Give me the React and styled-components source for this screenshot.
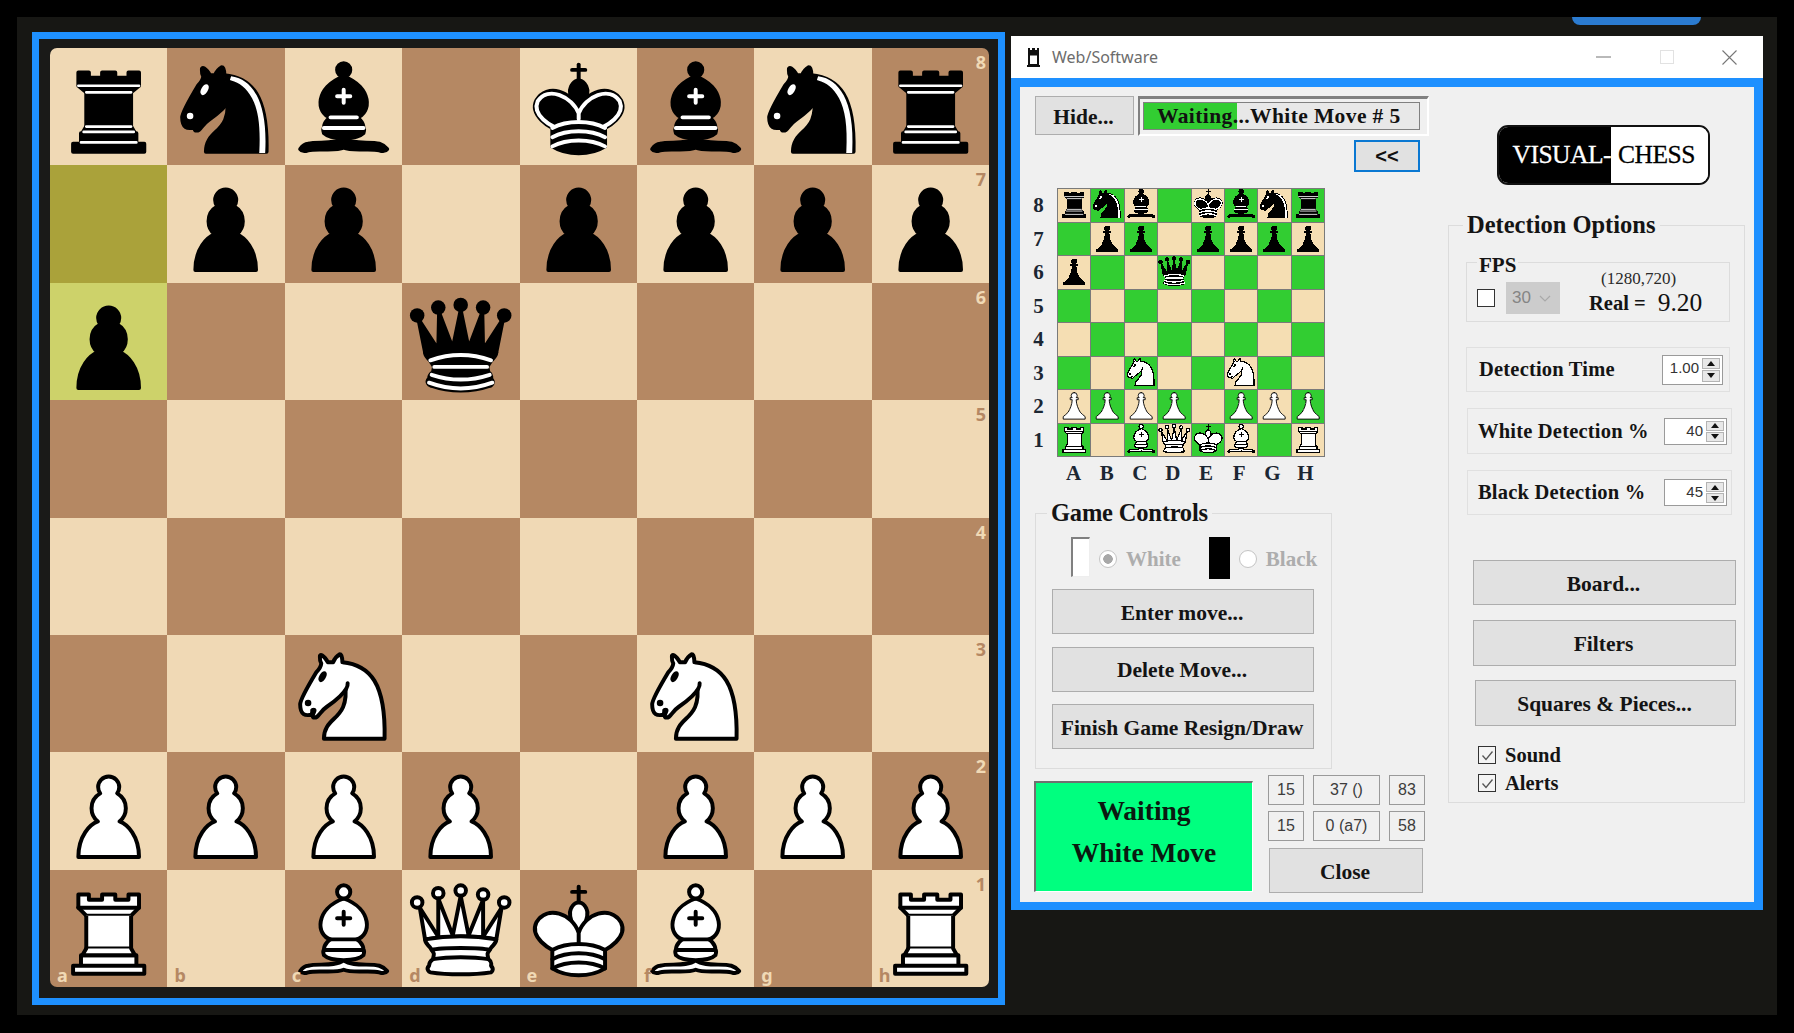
import React from 'react';
import styled, { createGlobalStyle } from 'styled-components';

const GlobalStyle = createGlobalStyle`
  html, body { margin: 0; padding: 0; background: #000; width: 1794px; height: 1033px; overflow: hidden; }
  * { box-sizing: border-box; }
  body { font-family: "Liberation Serif", "Times New Roman", serif; color: #111; }
`;

const BLUE = '#1e90ff';
const SERIF = '"Liberation Serif", "Times New Roman", serif';
const SANS = '"Liberation Sans", Arial, sans-serif';

/* ---------- chess piece drawings ---------- */
const stroke = { fillRule: 'evenodd', stroke: '#000', strokeLinecap: 'round', strokeLinejoin: 'round', strokeWidth: 1.5 };
const PAWN = 'M22.5 9c-2.21 0-4 1.79-4 4 0 .89.29 1.71.78 2.38C17.33 16.5 16 18.59 16 21c0 2.03.94 3.84 2.41 5.03-3 1.06-7.41 5.55-7.41 13.47h23c0-7.92-4.41-12.41-7.41-13.47 1.47-1.19 2.41-3 2.41-5.03 0-2.41-1.33-4.5-3.28-5.62.49-.67.78-1.49.78-2.38 0-2.21-1.79-4-4-4z';
const MINI_PAWN = 'M22.5 8a3.6 3.6 0 0 1 3.6 3.6c0 1.2-.6 2-1.2 2.6h2.4v2.4h-2.4c.2 6 2.4 10.8 4.8 15 1.8 1.8 4.2 4.2 6 5.4v3H9.3v-3c1.8-1.2 4.2-3.6 6-5.4 2.4-4.2 4.6-9 4.8-15h-2.4v-2.4h2.4c-.6-.6-1.2-1.4-1.2-2.6A3.6 3.6 0 0 1 22.5 8z';
const KING_BODY = 'M12.5 37c5.5 3.5 14.5 3.5 20 0v-7s9-4.5 6-10.5c-4-6.5-13.5-3.5-16 4V27v-3.5c-2.5-7.5-12-10.5-16-4-3 6 6 10.5 6 10.5v7';
const KING_HEAD = 'M22.5 25s4.5-7.5 3-10.5c0 0-1-2.5-3-2.5s-3 2.5-3 2.5c-1.5 3 3 10.5 3 10.5';
const KING_BANDS = 'M12.5 30c5.5-3 14.5-3 20 0m-20 3.5c5.5-3 14.5-3 20 0m-20 3.5c5.5-3 14.5-3 20 0';
const QUEEN_BASE = 'M9 26c0 2 1.5 2 2.5 4 1 1.5 1 1 .5 3.5-1.5 1-1.5 2.5-1.5 2.5-1.5 1.5.5 2.5.5 2.5 6.5 1 16.5 1 23 0 0 0 1.5-1 0-2.5 0 0 .5-1.5-1-2.5-.5-2.5-.5-2 .5-3.5 1-2 2.5-2 2.5-4-8.5-1.5-18.5-1.5-27 0z';
const BISHOP_FOOT = 'M9 36c3.39-.97 10.11.43 13.5-2 3.39 2.43 10.11 1.03 13.5 2 0 0 1.65.54 3 2-.68.97-1.65.99-3 .5-3.39-.97-10.11.46-13.5-1-3.39 1.46-10.11.03-13.5 1-1.354.49-2.323.47-3-.5 1.354-1.94 3-2 3-2z';
const BISHOP_BODY = 'M15 32c2.5 2.5 12.5 2.5 15 0 .5-1.5 0-2 0-2 0-2.5-2.5-4-2.5-4 5.5-1.5 6-11.5-5-15.5-11 4-10.5 14-5 15.5 0 0-2.5 1.5-2.5 4 0 0-.5.5 0 2z';
const BISHOP_TOP = 'M25 8a2.5 2.5 0 1 1-5 0 2.5 2.5 0 1 1 5 0z';
const BISHOP_MARK = 'M17.5 26h10M15 30h15m-7.5-14.5v5M20 18h5';
const KNIGHT_BACK = 'M22 10c10.5 1 16.5 8 16 29H15c0-9 10-6.5 8-21';
const KNIGHT_HEAD = 'M24 18c.38 2.91-5.55 7.37-8 9-3 2-2.82 4.34-5 4-1.042-.94 1.41-3.04 0-3-1 0 .19 1.23-1 2-1 0-4.003 1-4-4 0-2 6-12 6-12s1.89-1.9 2-3.5c-.73-.994-.5-2-.5-3 1-1 3 2.5 3 2.5h2s.78-1.992 2.5-3c1 0 1 3 1 3';
const KNIGHT_EYES = 'M9.5 25.5a.5.5 0 1 1-1 0 .5.5 0 1 1 1 0zm5.433-9.75a.5 1.5 30 1 1-.866-.5.5 1.5 30 1 1 .866.5z';

const PIECES = {
  P: <path {...stroke} fill="#fff" d={PAWN} />,
  p: <path {...stroke} fill="#000" d={PAWN} />,
  R: (
    <g {...stroke} fill="#fff">
      <path strokeLinecap="butt" d="M9 39h27v-3H9zm3-3v-4h21v4zm-1-22V9h4v2h5V9h5v2h5V9h4v5" />
      <path d="m34 14-3 3H14l-3-3" />
      <path strokeLinecap="butt" strokeLinejoin="miter" d="M31 17v12.5H14V17" />
      <path d="m31 29.5 1.5 2.5h-20l1.5-2.5" />
      <path fill="none" strokeLinejoin="miter" d="M11 14h23" />
    </g>
  ),
  r: (
    <g {...stroke} fill="#000">
      <path strokeLinecap="butt" d="M9 39h27v-3H9zm3.5-7 1.5-2.5h17l1.5 2.5zm-.5 4v-4h21v4z" />
      <path strokeLinecap="butt" strokeLinejoin="miter" d="M14 29.5v-13h17v13z" />
      <path strokeLinecap="butt" d="M14 16.5 11 14h23l-3 2.5zM11 14V9h4v2h5V9h5v2h5V9h4v5z" />
      <path fill="none" stroke="#fff" strokeLinejoin="miter" strokeWidth="1" d="M12 35.5h21m-20-4h19m-18-2h17m-17-13h17M11 14h23" />
    </g>
  ),
  N: (
    <g {...stroke} fill="none">
      <path fill="#fff" d={KNIGHT_BACK} />
      <path fill="#fff" d={KNIGHT_HEAD} />
      <path fill="#000" d={KNIGHT_EYES} />
    </g>
  ),
  n: (
    <g {...stroke} fill="none">
      <path fill="#000" d={KNIGHT_BACK} />
      <path fill="#000" d={KNIGHT_HEAD} />
      <path fill="#fff" stroke="#fff" d={KNIGHT_EYES} />
      <path fill="#fff" stroke="none" d="m24.55 10.4-.45 1.45.5.15c3.15 1 5.65 2.49 7.9 6.75S35.75 29.06 35.25 39l-.05.5h2.25l.05-.5c.5-10.06-.88-16.85-3.25-21.34s-5.79-6.64-9.19-7.16z" />
    </g>
  ),
  B: (
    <g {...stroke} fill="none">
      <g fill="#fff" strokeLinecap="butt">
        <path d={BISHOP_FOOT} /><path d={BISHOP_BODY} /><path d={BISHOP_TOP} />
      </g>
      <path strokeLinejoin="miter" d={BISHOP_MARK} />
    </g>
  ),
  b: (
    <g {...stroke} fill="none">
      <g fill="#000" strokeLinecap="butt">
        <path d={BISHOP_FOOT} /><path d={BISHOP_BODY} /><path d={BISHOP_TOP} />
      </g>
      <path stroke="#fff" strokeLinejoin="miter" d={BISHOP_MARK} />
    </g>
  ),
  Q: (
    <g {...stroke} fill="#fff">
      <path d="M8 12a2 2 0 1 1-4 0 2 2 0 1 1 4 0m16.5-4.5a2 2 0 1 1-4 0 2 2 0 1 1 4 0M41 12a2 2 0 1 1-4 0 2 2 0 1 1 4 0M16 8.5a2 2 0 1 1-4 0 2 2 0 1 1 4 0M33 9a2 2 0 1 1-4 0 2 2 0 1 1 4 0" />
      <path strokeLinecap="butt" d="M9 26c8.5-1.5 21-1.5 27 0l2-12-7 11V11l-5.5 13.5-3-15-3 15-5.5-14V25L7 14z" />
      <path strokeLinecap="butt" d={QUEEN_BASE} />
      <path fill="none" d="M11.5 30c3.5-1 18.5-1 22 0M12 33.5c6-1 15-1 21 0" />
    </g>
  ),
  q: (
    <g {...stroke} fill="#000">
      <g stroke="none">
        <circle cx="6" cy="12" r="2.75" /><circle cx="14" cy="9" r="2.75" /><circle cx="22.5" cy="8" r="2.75" />
        <circle cx="31" cy="9" r="2.75" /><circle cx="39" cy="12" r="2.75" />
      </g>
      <path strokeLinecap="butt" d="M9 26c8.5-1.5 21-1.5 27 0l2.5-12.5L31 25l-.3-14.1-5.2 13.6-3-14.5-3 14.5-5.2-13.6L14 25 6.5 13.5z" />
      <path strokeLinecap="butt" d={QUEEN_BASE} />
      <path fill="none" strokeLinecap="butt" d="M11 38.5a35 35 1 0 0 23 0" />
      <path fill="none" stroke="#fff" d="M11 29a35 35 1 0 1 23 0m-21.5 2.5h20m-21 3a35 35 1 0 0 22 0m-23 3a35 35 1 0 0 24 0" />
    </g>
  ),
  K: (
    <g {...stroke} fill="none">
      <path strokeLinejoin="miter" d="M22.5 11.63V6M20 8h5" />
      <path fill="#fff" strokeLinecap="butt" strokeLinejoin="miter" d={KING_HEAD} />
      <path fill="#fff" d={KING_BODY} />
      <path d={KING_BANDS} />
    </g>
  ),
  k: (
    <g {...stroke} fill="none">
      <path strokeLinejoin="miter" d="M22.5 11.63V6" />
      <path fill="#000" strokeLinecap="butt" strokeLinejoin="miter" d={KING_HEAD} />
      <path fill="#000" d={KING_BODY} />
      <path strokeLinejoin="miter" d="M20 8h5" />
      <path stroke="#fff" d="M32 29.5s8.5-4 6.03-9.65C34.15 14 25 18 22.5 24.5v2.1-2.1C20 18 10.85 14 6.97 19.85 4.5 25.5 13 29.5 13 29.5" />
      <path stroke="#fff" d={KING_BANDS} />
    </g>
  ),
};

const MINI_PIECES = {
  ...PIECES,
  P: <path {...stroke} strokeWidth="1.1" fill="#fff" d={MINI_PAWN} />,
  p: <path {...stroke} strokeWidth="0" fill="#000" d={MINI_PAWN} />,
};

const POSITION = [
  'rnb.kbnr',
  '.pp.pppp',
  'p..q....',
  '........',
  '........',
  '..N..N..',
  'PPPP.PPP',
  'R.BQKB.R',
];

const Piece = ({ code }) => (
  <PieceSvg viewBox="0.25 -0.3 44.5 44.5">{PIECES[code]}</PieceSvg>
);

const MiniPiece = ({ code }) => (
  <PieceSvg viewBox="3 5 39 39" shapeRendering="crispEdges">{MINI_PIECES[code]}</PieceSvg>
);

/* ---------- page frame ---------- */
const Page = styled.div`
  width: 1794px;
  height: 1033px;
  padding: 17px 0 0 17px;
  background: #000;
`;

const Stage = styled.div`
  position: relative;
  width: 1760px;
  height: 998px;
  padding: 15px 0 0 15px;
  background: #171714;
  display: flex;
  align-items: flex-start;
  gap: 6px;
`;

const TopTab = styled.div`
  position: absolute;
  top: 0;
  left: 1555px;
  width: 129px;
  height: 8px;
  background: #2b7bd0;
  border-radius: 0 0 9px 9px;
`;

const BoardFrame = styled.div`
  width: 973px;
  height: 973px;
  flex: none;
  padding: 9px 8px 10px 11px;
  border: 7.5px solid ${BLUE};
  background: #1a1a18;
`;

const PieceSvg = styled.svg`
  display: block;
  width: 100%;
  height: 100%;
`;

/* ---------- big board ---------- */
const Board = styled.div`
  width: 939px;
  height: 939px;
  display: grid;
  grid-template-columns: repeat(8, 1fr);
  grid-template-rows: repeat(8, 1fr);
  border-radius: 7px;
  overflow: hidden;
`;

const Square = styled.div`
  position: relative;
  background: ${(p) => p.$bg};
`;

const Coord = styled.span`
  position: absolute;
  font-family: "Noto Sans", sans-serif;
  font-weight: 700;
  font-size: 18px;
  line-height: 1;
  color: ${(p) => p.$color};
  ${(p) => (p.$rank ? 'top: 5px; right: 3px;' : 'bottom: 3px; left: 7px;')}
`;

/* ---------- window ---------- */
const Window = styled.div`
  width: 752px;
  height: 874px;
  margin-top: 4px;
  flex: none;
  display: flex;
  flex-direction: column;
`;

const TitleBar = styled.div`
  height: 42px;
  flex: none;
  background: #fff;
  display: flex;
  align-items: center;
  padding: 0 2px 0 16px;
`;

const TitleText = styled.span`
  margin-left: 12px;
  font-family: "Noto Sans", sans-serif;
  font-size: 16px;
  color: #6c6c6c;
`;

const WindowControls = styled.div`
  margin-left: auto;
  display: flex;
`;

const WindowControl = styled.div`
  width: 63px;
  height: 42px;
  display: flex;
  align-items: center;
  justify-content: center;
`;

const WindowBody = styled.div`
  flex: 1;
  min-height: 0;
  border: 9px solid ${BLUE};
  border-bottom-width: 8px;
  background: #f0f0f0;
  display: flex;
`;

const LeftColumn = styled.div`
  width: 420px;
  flex: none;
`;

const RightColumn = styled.div`
  flex: 1;
`;

/* ---------- controls ---------- */
const Button = styled.div`
  width: ${(p) => p.$w || 262}px;
  height: ${(p) => p.$h || 45}px;
  flex: none;
  padding: 3px 2px 0 0;
  display: flex;
  align-items: center;
  justify-content: center;
  background: #e1e1e1;
  border: 1.5px solid #adadad;
  font-family: ${SERIF};
  font-weight: 700;
  font-size: 21.5px;
  color: #141414;
  white-space: nowrap;
`;

const TopRow = styled.div`
  display: flex;
  gap: 4px;
  padding: 9px 0 0 15px;
`;

const StatusWell = styled.div`
  width: 291px;
  height: 40px;
  padding: 3px 8px 3px 3px;
  border-style: solid;
  border-width: 3px 2px 2px 2px;
  border-color: #808080 #fff #fff #808080;
  background: #f0f0f0;
`;

const StatusBar = styled.div`
  height: 28px;
  width: 277px;
  border: 1px solid #808080;
  background: linear-gradient(to right, #32cd32 ${(p) => p.$pct}%, #e8e8e8 ${(p) => p.$pct}%);
  display: flex;
  align-items: center;
  padding-left: 13px;
  font-family: ${SERIF};
  font-weight: 700;
  font-size: 21.5px;
  letter-spacing: 0.4px;
  white-space: nowrap;
  color: #111;
`;

const BackButton = styled.div`
  width: 66px;
  height: 32px;
  margin: 4px 0 0 334px;
  display: flex;
  align-items: center;
  justify-content: center;
  background: #e1e1e1;
  border: 2.5px solid #0a78d2;
  font-family: ${SANS};
  font-weight: 700;
  font-size: 20px;
  color: #111;
`;

/* ---------- mini board ---------- */
const MiniLayout = styled.div`
  margin-top: 16px;
  display: grid;
  grid-template-columns: 37px 268px;
`;

const RankLabels = styled.div`
  display: grid;
  grid-template-rows: repeat(8, 1fr);
  padding-top: 1px;
`;

const FileLabels = styled.div`
  grid-column: 2;
  height: 32px;
  display: grid;
  grid-template-columns: repeat(8, 1fr);
  padding-right: 3px;
`;

const MiniLabel = styled.span`
  display: flex;
  align-items: center;
  justify-content: center;
  font-family: ${SERIF};
  font-weight: 700;
  font-size: 21px;
  color: #1c2733;
`;

const MiniBoard = styled.div`
  width: 268px;
  height: 269px;
  padding: 1px;
  display: grid;
  gap: 1px;
  grid-template-columns: repeat(8, 1fr);
  grid-template-rows: repeat(8, 1fr);
  background: #7a7a7a;
`;

const MiniSquare = styled.div`
  background: ${(p) => (p.$light ? '#f5deb3' : '#32cd32')};
  min-width: 0;
  min-height: 0;
`;

/* ---------- group boxes ---------- */
const Group = styled.fieldset`
  margin: ${(p) => p.$margin};
  padding: ${(p) => p.$padding || 0};
  width: 297px;
  height: ${(p) => p.$h}px;
  border: 1.5px solid #dcdcdc;
  min-width: 0;
`;

const GroupTitle = styled.legend`
  margin-left: ${(p) => p.$left}px;
  padding: 0 4px;
  height: 28px;
  line-height: 28px;
  font-family: ${SERIF};
  font-weight: 700;
  font-size: 24.5px;
  letter-spacing: ${(p) => p.$spacing}px;
  color: #141414;
  white-space: nowrap;
`;

const SideRow = styled.div`
  display: flex;
  align-items: flex-start;
  padding: 10px 0 0 35px;
  height: 62px;
`;

const WhiteSwatch = styled.div`
  width: 19px;
  height: 40px;
  background: #fff;
  border-style: solid;
  border-width: 2px 1px 1px 2px;
  border-color: #808080 #eee #eee #808080;
`;

const BlackSwatch = styled.div`
  width: 21px;
  height: 42px;
  margin-left: 28px;
  background: #000;
`;

const Radio = styled.span`
  width: 18px;
  height: 18px;
  margin: 13px 0 0 9px;
  flex: none;
  border-radius: 50%;
  border: 1.5px solid #c4c4c4;
  background: ${(p) => (p.$on ? 'radial-gradient(circle, #a8a8a8 0 4.5px, #fff 5px)' : '#fff')};
`;

const DisabledLabel = styled.span`
  margin: 10px 0 0 9px;
  font-family: ${SERIF};
  font-weight: 700;
  font-size: 21px;
  line-height: 25px;
  color: #adadad;
`;

const ButtonStack = styled.div`
  display: flex;
  flex-direction: column;
  gap: 12.5px;
  margin-left: 16px;
`;

/* ---------- bottom left ---------- */
const BottomRow = styled.div`
  display: flex;
  align-items: flex-start;
  padding: 6px 0 0 14px;
`;

const StateBlock = styled.div`
  width: 219px;
  height: 111px;
  margin-top: 6px;
  padding-bottom: 12px;
  display: flex;
  flex-direction: column;
  align-items: center;
  justify-content: center;
  gap: 13px;
  background: #00ff7f;
  border-style: solid;
  border-width: 2px 1px 1px 2px;
  border-color: #707070 #fff #fff #707070;
  font-family: ${SERIF};
  font-weight: 700;
  font-size: 27.5px;
  line-height: 29px;
  color: #0a1a10;
`;

const Readouts = styled.div`
  margin-left: 15px;
  display: grid;
  grid-template-columns: 36px 67px 36px;
  grid-template-rows: 30px 30px auto;
  gap: 6px 9px;
`;

const Readout = styled.div`
  display: flex;
  align-items: center;
  justify-content: center;
  border: 1px solid #9a9a9a;
  background: #f0f0f0;
  font-family: ${SANS};
  font-size: 16px;
  color: #3c3c3c;
`;

const CloseSlot = styled.div`
  grid-column: 1 / 4;
  margin: 1px 0 0 1px;
`;

/* ---------- right column ---------- */
const Logo = styled.div`
  width: 213px;
  height: 60px;
  margin: 38px 0 0 57px;
  display: flex;
  border: 2.5px solid #111;
  border-radius: 11px;
  overflow: hidden;
  font-family: ${SERIF};
  font-size: 25.5px;
  letter-spacing: -0.5px;
  -webkit-text-stroke: 0.3px currentColor;
`;

const LogoDark = styled.div`
  width: 112px;
  background: #000;
  color: #fff;
  display: flex;
  align-items: center;
  justify-content: flex-end;
`;

const LogoLight = styled.div`
  flex: 1;
  background: #fff;
  color: #000;
  display: flex;
  align-items: center;
  padding-left: 7px;
`;

const SubGroup = styled.fieldset`
  margin: 13px 0 0;
  padding: 0;
  width: 264px;
  height: 70px;
  border: 1.5px solid #dcdcdc;
  min-width: 0;
`;

const SubTitle = styled.legend`
  margin-left: 10px;
  padding: 0 2px;
  height: 20px;
  line-height: 26px;
  font-family: ${SERIF};
  font-weight: 700;
  font-size: 21px;
  color: #141414;
`;

const FpsRow = styled.div`
  display: flex;
  align-items: flex-start;
  padding-left: 10px;
`;

const Check = styled.span`
  width: 18px;
  height: 18px;
  flex: none;
  display: flex;
  align-items: center;
  justify-content: center;
  border: 1.5px solid #333;
  background: ${(p) => p.$bg};
`;

const FpsCheck = styled.div`
  margin-top: 17px;
`;

const FpsSelect = styled.div`
  width: 54px;
  height: 32px;
  margin: 10px 0 0 11px;
  display: flex;
  align-items: center;
  padding-left: 6px;
  gap: 8px;
  background: #cccccc;
  font-family: ${SANS};
  font-size: 17px;
  color: #858585;
`;

const FpsStats = styled.div`
  margin: 0 0 0 29px;
`;

const Resolution = styled.div`
  height: 14px;
  padding-left: 12px;
  font-size: 17px;
  line-height: 14px;
  color: #2a2a2a;
  white-space: nowrap;
`;

const RealLine = styled.div`
  margin-top: 2px;
  height: 30px;
  display: flex;
  align-items: center;
  font-weight: 700;
  font-size: 20.5px;
  color: #141414;
  white-space: nowrap;
`;

const RealValue = styled.span`
  margin-left: 12px;
  font-weight: 400;
  font-size: 25.5px;
  color: #111;
`;

const OptionRow = styled.div`
  width: ${(p) => p.$w}px;
  height: ${(p) => p.$h}px;
  margin: ${(p) => p.$top}px 0 0 ${(p) => p.$left}px;
  padding: 0 ${(p) => p.$pr}px 0 ${(p) => p.$pl}px;
  display: flex;
  align-items: center;
  justify-content: space-between;
  border: 1.5px solid #e0e0e0;
`;

const OptionLabel = styled.span`
  font-weight: 700;
  font-size: 20.5px;
  letter-spacing: 0.2px;
  color: #141414;
  white-space: nowrap;
`;

const Spin = styled.div`
  width: ${(p) => p.$w}px;
  height: ${(p) => p.$h}px;
  display: flex;
  align-items: stretch;
  padding: 2px;
  border: 1px solid #9a9a9a;
  background: #fff;
`;

const SpinValue = styled.span`
  flex: 1;
  text-align: right;
  padding-right: 3px;
  font-family: ${SANS};
  font-size: 15px;
  line-height: 20px;
  color: #333;
`;

const SpinArrows = styled.div`
  width: 18px;
  display: flex;
  flex-direction: column;
  gap: 1px;
`;

const SpinArrow = styled.div`
  flex: 1;
  display: flex;
  align-items: center;
  justify-content: center;
  background: #e8e8e8;
  border: 1px solid #b4b4b4;
`;

const ActionStack = styled.div`
  margin: ${(p) => p.$top}px 0 0 ${(p) => p.$left}px;
`;

const CheckRow = styled.div`
  display: flex;
  align-items: center;
  gap: 9px;
  margin: ${(p) => p.$top}px 0 0 12px;
  height: 18px;
  font-weight: 700;
  font-size: 20.5px;
  color: #141414;
`;

const CheckMark = () => (
  <svg width="13" height="13" viewBox="0 0 13 13">
    <path d="M1.5 6.5 5 10.5 11.5 2.5" fill="none" stroke="#555" strokeWidth="1.3" />
  </svg>
);

const Spinner = ({ value, w, h }) => (
  <Spin $w={w} $h={h}>
    <SpinValue>{value}</SpinValue>
    <SpinArrows>
      <SpinArrow>
        <svg width="8" height="5" viewBox="0 0 8 5"><path d="M4 0 8 5H0z" fill="#111" /></svg>
      </SpinArrow>
      <SpinArrow>
        <svg width="8" height="5" viewBox="0 0 8 5"><path d="M4 5 8 0H0z" fill="#111" /></svg>
      </SpinArrow>
    </SpinArrows>
  </Spin>
);

const ranks = ['8', '7', '6', '5', '4', '3', '2', '1'];
const files = ['a', 'b', 'c', 'd', 'e', 'f', 'g', 'h'];

const squareColor = (r, f) => {
  if (r === 1 && f === 0) return '#aaa23a';
  if (r === 2 && f === 0) return '#cdd26a';
  return (r + f) % 2 === 0 ? '#f0d9b5' : '#b58863';
};

const App = () => (
  <>
    <GlobalStyle />
    <Page>
      <Stage>
        <TopTab />
        <BoardFrame>
          <Board>
            {POSITION.map((row, r) =>
              row.split('').map((c, f) => (
                <Square key={`${r}-${f}`} $bg={squareColor(r, f)}>
                  {c !== '.' && <Piece code={c} />}
                  {f === 7 && (
                    <Coord $rank $color={r % 2 === 0 ? '#f0d9b5' : '#b58863'}>{ranks[r]}</Coord>
                  )}
                  {r === 7 && (
                    <Coord $color={f % 2 === 0 ? '#f0d9b5' : '#b58863'}>{files[f]}</Coord>
                  )}
                </Square>
              ))
            )}
          </Board>
        </BoardFrame>

        <Window>
          <TitleBar>
            <svg width="13" height="20" viewBox="0 0 13 20">
              <path d="M1 1h2v2h2V1h3v2h2V1h2v6H1z" fill="#111" />
              <path d="M2 7.5h9V18H2z" fill="#fff" stroke="#111" strokeWidth="2" />
              <path d="M0 18h13v2H0z" fill="#111" />
            </svg>
            <TitleText>Web/Software</TitleText>
            <WindowControls>
              <WindowControl>
                <svg width="15" height="2" viewBox="0 0 15 2"><path d="M0 1h15" stroke="#8a8a8a" strokeWidth="1.2" /></svg>
              </WindowControl>
              <WindowControl>
                <svg width="14" height="14" viewBox="0 0 14 14"><rect x="0.5" y="0.5" width="13" height="13" fill="none" stroke="#e2e2e2" /></svg>
              </WindowControl>
              <WindowControl>
                <svg width="15" height="15" viewBox="0 0 15 15"><path d="M.5.5l14 14M14.5.5l-14 14" stroke="#777" strokeWidth="1.1" /></svg>
              </WindowControl>
            </WindowControls>
          </TitleBar>
          <WindowBody>
            <LeftColumn>
              <TopRow>
                <Button $w={99} $h={39}>Hide...</Button>
                <StatusWell>
                  <StatusBar $pct={34}>Waiting...White Move # 5</StatusBar>
                </StatusWell>
              </TopRow>
              <BackButton>&lt;&lt;</BackButton>

              <MiniLayout>
                <RankLabels>
                  {ranks.map((r) => <MiniLabel key={r}>{r}</MiniLabel>)}
                </RankLabels>
                <MiniBoard>
                  {POSITION.map((row, r) =>
                    row.split('').map((c, f) => (
                      <MiniSquare key={`${r}-${f}`} $light={(r + f) % 2 === 0}>
                        {c !== '.' && <MiniPiece code={c} />}
                      </MiniSquare>
                    ))
                  )}
                </MiniBoard>
                <FileLabels>
                  {files.map((f) => <MiniLabel key={f}>{f.toUpperCase()}</MiniLabel>)}
                </FileLabels>
              </MiniLayout>

              <Group $margin="10px 0 0 15px" $h={270}>
                <GroupTitle $left={11} $spacing={-0.2}>Game Controls</GroupTitle>
                <SideRow>
                  <WhiteSwatch />
                  <Radio $on />
                  <DisabledLabel>White</DisabledLabel>
                  <BlackSwatch />
                  <Radio />
                  <DisabledLabel>Black</DisabledLabel>
                </SideRow>
                <ButtonStack>
                  <Button>Enter move...</Button>
                  <Button>Delete Move...</Button>
                  <Button>Finish Game Resign/Draw</Button>
                </ButtonStack>
              </Group>

              <BottomRow>
                <StateBlock>
                  <span>Waiting</span>
                  <span>White Move</span>
                </StateBlock>
                <Readouts>
                  <Readout>15</Readout>
                  <Readout>37 ()</Readout>
                  <Readout>83</Readout>
                  <Readout>15</Readout>
                  <Readout>0 (a7)</Readout>
                  <Readout>58</Readout>
                  <CloseSlot>
                    <Button $w={154}>Close</Button>
                  </CloseSlot>
                </Readouts>
              </BottomRow>
            </LeftColumn>

            <RightColumn>
              <Logo>
                <LogoDark>VISUAL-</LogoDark>
                <LogoLight>CHESS</LogoLight>
              </Logo>
              <Group $margin="26px 0 0 8px" $padding="0 0 0 17px" $h={592}>
                <GroupTitle $left={-3} $spacing={0}>Detection Options</GroupTitle>
                <SubGroup>
                  <SubTitle>FPS</SubTitle>
                  <FpsRow>
                    <FpsCheck><Check $bg="#fff" /></FpsCheck>
                    <FpsSelect>
                      30
                      <svg width="12" height="7" viewBox="0 0 12 7"><path d="M1 1l5 5 5-5" fill="none" stroke="#a9a9a9" strokeWidth="1.2" /></svg>
                    </FpsSelect>
                    <FpsStats>
                      <Resolution>(1280,720)</Resolution>
                      <RealLine>Real =<RealValue>9.20</RealValue></RealLine>
                    </FpsStats>
                  </FpsRow>
                </SubGroup>
                <OptionRow $w={264} $h={45} $top={25} $left={0} $pl={12} $pr={6}>
                  <OptionLabel>Detection Time</OptionLabel>
                  <Spinner value="1.00" w={61} h={30} />
                </OptionRow>
                <OptionRow $w={265} $h={46} $top={16} $left={1} $pl={10} $pr={4}>
                  <OptionLabel>White Detection %</OptionLabel>
                  <Spinner value="40" w={63} h={27} />
                </OptionRow>
                <OptionRow $w={265} $h={45} $top={16} $left={1} $pl={10} $pr={4}>
                  <OptionLabel>Black Detection %</OptionLabel>
                  <Spinner value="45" w={63} h={27} />
                </OptionRow>
                <ActionStack $top={45} $left={7}>
                  <Button $w={263}>Board...</Button>
                </ActionStack>
                <ActionStack $top={15} $left={7}>
                  <Button $w={263} $h={46}>Filters</Button>
                </ActionStack>
                <ActionStack $top={14} $left={9}>
                  <Button $w={261} $h={46}>Squares &amp; Pieces...</Button>
                </ActionStack>
                <CheckRow $top={20}>
                  <Check $bg="#f4f4f4"><CheckMark /></Check>
                  Sound
                </CheckRow>
                <CheckRow $top={10}>
                  <Check $bg="#f4f4f4"><CheckMark /></Check>
                  Alerts
                </CheckRow>
              </Group>
            </RightColumn>
          </WindowBody>
        </Window>
      </Stage>
    </Page>
  </>
);

export default App;
